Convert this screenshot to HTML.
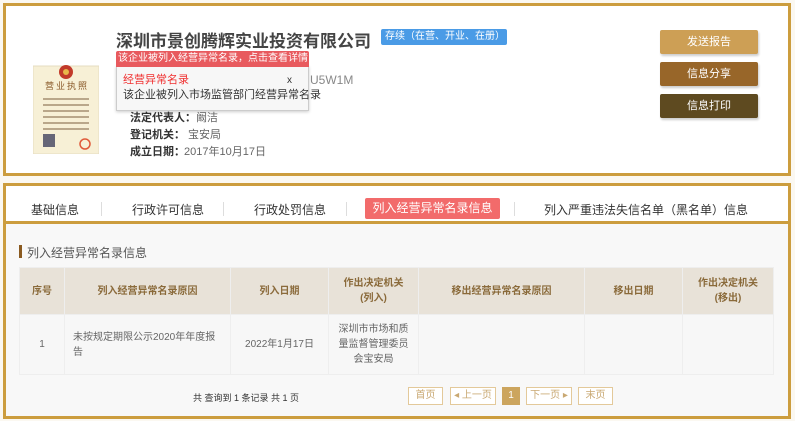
<!DOCTYPE html>
<html><head><meta charset="utf-8"><style>
*{margin:0;padding:0;box-sizing:border-box}
body{width:795px;height:421px;background:#fbf8f1;font-family:"Liberation Sans","Noto Sans CJK SC",sans-serif;position:relative;overflow:hidden;color:#444}
.a{position:absolute;white-space:nowrap}
.p1{position:absolute;left:3px;top:3px;width:788px;height:173px;border:3px solid #cc9d3e;background:#fff}
.p2{position:absolute;left:3px;top:183px;width:788px;height:236px;border:3px solid #cc9d3e;background:#f8f8f8}
.btn{position:absolute;left:660px;width:98px;height:24px;border-radius:2px;color:#fff;font-size:11px;text-align:center;line-height:24px;box-shadow:1px 2px 2px rgba(0,0,0,.2)}
.lbl{font-size:11px;color:#333;font-weight:bold}
.val{font-size:11px;color:#666}
table{position:absolute;left:19px;top:267px;border-collapse:collapse;font-size:10px}
td,th{border:1px solid #eee;text-align:center;vertical-align:middle}
th{background:#e8e2d8;color:#8a6a3a;height:47px;font-weight:bold;line-height:15px}
td{background:#f7f7f7;color:#666;height:60px;line-height:15px}
.pg{position:absolute;top:387px;height:18px;border:1px solid #e3c99a;background:#fff;color:#c9a872;font-size:10px;text-align:center;line-height:16px}
.sep{position:absolute;top:202px;width:1px;height:14px;background:#ddd}
</style></head><body>
<div class="p1"></div>
<svg class="a" style="left:33px;top:62px" width="66" height="92" viewBox="0 0 66 92">
<rect x="0" y="4" width="66" height="88" fill="#f7f0d6" stroke="#e5dcc0"/>
<circle cx="33" cy="10" r="7" fill="#c23a2a"/><circle cx="33" cy="10" r="3" fill="#e8b84a"/>
<text x="33" y="27" font-size="9" fill="#8a5a2a" text-anchor="middle" font-family="Noto Sans CJK SC">营 业 执 照</text>
<g fill="#b9a78a"><rect x="10" y="36" width="46" height="2"/><rect x="10" y="42" width="46" height="2"/><rect x="10" y="48" width="46" height="2"/><rect x="10" y="54" width="46" height="2"/><rect x="10" y="60" width="46" height="2"/><rect x="10" y="66" width="46" height="2"/></g>
<rect x="10" y="72" width="12" height="13" fill="#667"/>
<circle cx="52" cy="82" r="5" fill="none" stroke="#e05a3a" stroke-width="1.5"/>
</svg>
<div class="a" style="left:116px;top:27px;font-size:17px;font-weight:bold;color:#444">深圳市景创腾辉实业投资有限公司</div>
<div class="a" style="left:381px;top:29px;width:126px;height:16px;background:#4a9be6;color:#fff;font-size:10px;line-height:16px;padding-left:4px;border-radius:2px">存续（在营、开业、在册）</div>
<div class="a" style="left:310px;top:73px;font-size:12px;color:#888">U5W1M</div>
<div class="a lbl" style="left:130px;top:109px">法定代表人：</div><div class="a val" style="left:196px;top:109px">阚洁</div>
<div class="a lbl" style="left:130px;top:126px">登记机关：</div><div class="a val" style="left:188px;top:126px">宝安局</div>
<div class="a lbl" style="left:130px;top:143px">成立日期：</div><div class="a val" style="left:184px;top:143px">2017年10月17日</div>
<div class="a" style="left:116px;top:66px;width:193px;height:45px;background:#f7f7f7;border:1px solid #ccc;box-shadow:0 1px 3px rgba(0,0,0,.2)"></div>
<div class="a" style="left:116px;top:51px;width:193px;height:16px;background:#e85a5e;color:#fff;font-size:10px;line-height:16px;padding-left:2px;border-radius:2px 2px 0 0;overflow:hidden">该企业被列入经营异常名录，点击查看详情</div>
<div class="a" style="left:123px;top:71px;font-size:11px;color:#f03030">经营异常名录</div>
<div class="a" style="left:287px;top:75px;font-size:10px;color:#333">x</div>
<div class="a" style="left:123px;top:86px;font-size:11px;color:#333">该企业被列入市场监管部门经营异常名录</div>
<div class="btn" style="top:30px;background:#cd9f55">发送报告</div>
<div class="btn" style="top:62px;background:#986629">信息分享</div>
<div class="btn" style="top:94px;background:#5e4a20">信息打印</div>

<div class="p2"></div>
<div class="a" style="left:6px;top:186px;width:782px;height:38px;background:#fff;border-bottom:3px solid #cc9d3e"></div>
<div class="a" style="left:31px;top:201px;font-size:12px;color:#333">基础信息</div>
<div class="sep" style="left:101px"></div>
<div class="a" style="left:132px;top:201px;font-size:12px;color:#333">行政许可信息</div>
<div class="sep" style="left:223px"></div>
<div class="a" style="left:254px;top:201px;font-size:12px;color:#333">行政处罚信息</div>
<div class="sep" style="left:346px"></div>
<div class="a" style="left:365px;top:198px;width:135px;height:21px;background:#f26b6b;border-radius:2px;color:#fff;font-size:12px;line-height:21px;text-align:center">列入经营异常名录信息</div>
<div class="sep" style="left:514px"></div>
<div class="a" style="left:544px;top:201px;font-size:12px;color:#333">列入严重违法失信名单（黑名单）信息</div>
<div class="a" style="left:19px;top:245px;width:3px;height:13px;background:#8a5a20"></div>
<div class="a" style="left:27px;top:244px;font-size:12px;color:#555">列入经营异常名录信息</div>
<table>
<tr><th style="width:45px">序号</th><th style="width:166px">列入经营异常名录原因</th><th style="width:98px">列入日期</th><th style="width:90px">作出决定机关<br>(列入)</th><th style="width:166px">移出经营异常名录原因</th><th style="width:98px">移出日期</th><th style="width:91px">作出决定机关<br>(移出)</th></tr>
<tr><td>1</td><td style="text-align:left;padding-left:8px">未按规定期限公示2020年年度报<br>告</td><td>2022年1月17日</td><td>深圳市市场和质<br>量监督管理委员<br>会宝安局</td><td></td><td></td><td></td></tr>
</table>
<div class="a" style="left:193px;top:391px;font-size:9px;color:#333">共 查询到 1 条记录 共 1 页</div>
<div class="pg" style="left:408px;width:35px">首页</div>
<div class="pg" style="left:450px;width:46px">◂ 上一页</div>
<div class="pg" style="left:502px;width:18px;background:#cca55e;border-color:#cca55e;color:#fff">1</div>
<div class="pg" style="left:526px;width:46px">下一页 ▸</div>
<div class="pg" style="left:578px;width:35px">末页</div>
</body></html>
